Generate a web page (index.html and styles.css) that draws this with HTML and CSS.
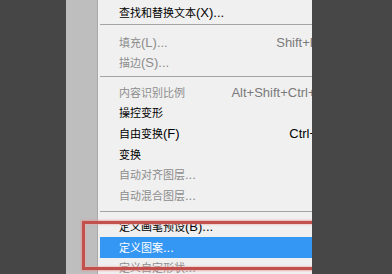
FILE: index.html
```html
<!DOCTYPE html>
<html lang="zh-CN">
<head>
<meta charset="utf-8">
<title>编辑菜单</title>
<link rel="stylesheet" href="styles.css">
</head>
<body>
<div class="screen">
  <div class="dark"></div>
  <div class="mid">
    <div class="strip"></div>
    <div class="menu">
      <div class="row first"><span class="label">查找和替换文本<span class="lat">(X)...</span></span></div>
      <div class="sep sep-a"></div>
      <div class="row dis"><span class="label">填充<span class="lat">(L)...</span></span><span class="key">Shift+F5</span></div>
      <div class="row dis"><span class="label">描边<span class="lat">(S)...</span></span></div>
      <div class="sep sep-b"></div>
      <div class="row tall dis"><span class="label">内容识别比例</span><span class="key">Alt+Shift+Ctrl+C</span></div>
      <div class="row tall"><span class="label">操控变形</span></div>
      <div class="row tall"><span class="label">自由变换<span class="lat">(F)</span></span><span class="key">Ctrl+T</span></div>
      <div class="row tall"><span class="label">变换</span></div>
      <div class="row tall dis"><span class="label">自动对齐图层<span class="lat">...</span></span></div>
      <div class="row tall dis"><span class="label">自动混合图层<span class="lat">...</span></span></div>
      <div class="sep sep-c"></div>
      <div class="row mid-h"><span class="label">定义画笔预设<span class="lat">(B)...</span></span></div>
      <div class="row mid-h active"><span class="label">定义图案<span class="lat">...</span></span></div>
      <div class="row mid-h dis"><span class="label">定义自定形状<span class="lat">...</span></span></div>
    </div>
    <div class="mark"></div>
  </div>
  <div class="dark fill"></div>
</div>
</body>
</html>
```
FILE: styles.css
```css
html, body {
  margin: 0;
  padding: 0;
  background: #464646;
}
.screen {
  width: 392px;
  height: 274px;
  display: flex;
  overflow: hidden;
}
.dark {
  width: 66px;
  flex: none;
  background: #464646;
}
.dark.fill {
  flex: 1;
  width: auto;
  background: #474747;
}
.mid {
  width: 246px;
  flex: none;
  position: relative;
  overflow: hidden;
  display: flex;
}
.strip {
  width: 31px;
  flex: none;
  background: #bebebe;
}
.menu {
  width: 232px;
  flex: none;
  background: #f0f0f0;
  border-left: 1px solid #a9a9a9;
  padding-top: 2px;
  font-family: "Noto Sans CJK SC", "Liberation Sans", sans-serif;
  font-size: 11px;
  color: #000;
}
.row {
  display: flex;
  align-items: center;
  height: 20px;
  margin-left: 2px;
  padding-left: 19px;
  padding-right: 5px;
  line-height: 1;
  white-space: nowrap;
}
.row.tall { height: 20.6px; }
.row.mid-h { height: 20.5px; }
.label { flex: 1; }
.lat {
  font-family: "Liberation Sans", sans-serif;
  font-size: 13px;
}
.key {
  font-family: "Liberation Sans", sans-serif;
  font-size: 13px;
  color: #000;
}
.dis { color: #8c8c8c; }
.row.dis .key { color: #7a7a7a; }
.active {
  background: #3597f4;
  color: #fff;
}
.sep {
  margin-left: 2px;
  border-top: 1px solid #a4a4a4;
  height: 0;
}
.sep-a { margin-top: 2px; margin-bottom: 7px; }
.sep-b { margin-top: 4px; margin-bottom: 5px; }
.sep-c { margin-top: 5.4px; margin-bottom: 4.6px; }
.mark {
  position: absolute;
  left: 16px;
  top: 221px;
  width: 300px;
  height: 43px;
  border: 3.5px solid #c2504d;
  box-shadow: 0 0 1.5px 1px rgba(230, 140, 140, 0.6), inset 0 0 1.5px 1px rgba(240, 170, 170, 0.5);
}
```
